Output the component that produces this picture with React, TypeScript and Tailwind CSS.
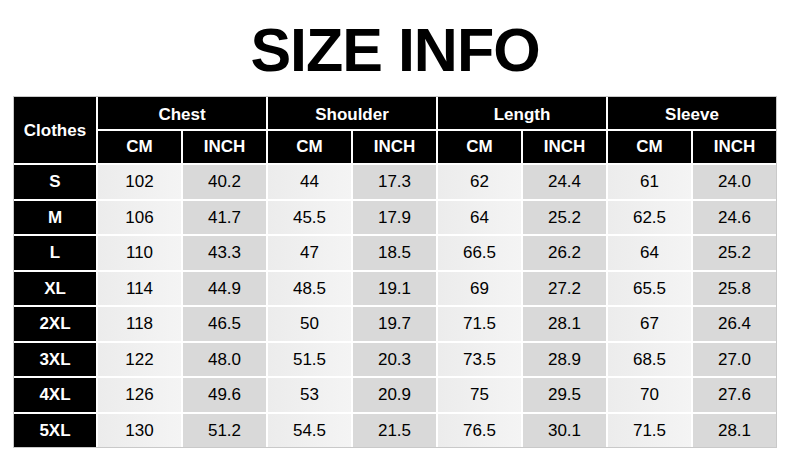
import { Fragment } from 'react';

const groups = ['Chest', 'Shoulder', 'Length', 'Sleeve'];

const rows: [string, string[]][] = [
  ['S', ['102', '40.2', '44', '17.3', '62', '24.4', '61', '24.0']],
  ['M', ['106', '41.7', '45.5', '17.9', '64', '25.2', '62.5', '24.6']],
  ['L', ['110', '43.3', '47', '18.5', '66.5', '26.2', '64', '25.2']],
  ['XL', ['114', '44.9', '48.5', '19.1', '69', '27.2', '65.5', '25.8']],
  ['2XL', ['118', '46.5', '50', '19.7', '71.5', '28.1', '67', '26.4']],
  ['3XL', ['122', '48.0', '51.5', '20.3', '73.5', '28.9', '68.5', '27.0']],
  ['4XL', ['126', '49.6', '53', '20.9', '75', '29.5', '70', '27.6']],
  ['5XL', ['130', '51.2', '54.5', '21.5', '76.5', '30.1', '71.5', '28.1']],
];

// black header cell
const head = 'bg-black text-white font-bold text-[17px] flex items-center justify-center';

export default function App() {
  return (
    <div className="w-[790px] h-[459px] bg-white font-['Liberation_Sans',Arial,sans-serif] text-black">
      <h1 className="pt-[20px] text-center text-[61px] leading-[61px] font-bold tracking-[-1px]">
        SIZE INFO
      </h1>

      <div className="mt-[15px] mx-auto w-fit border border-[#c9c9c9] bg-white grid grid-cols-[82px_repeat(8,83px)] grid-rows-[32px_32px_repeat(8,33.5px)] gap-[2px]">
        <div className={head + ' row-span-2 pt-[2px]'}>Clothes</div>
        {groups.map((g) => (
          <div key={g} className={head + ' col-span-2 pt-[3px]'}>
            {g}
          </div>
        ))}
        {groups.map((g) => (
          <Fragment key={g}>
            <div className={head}>CM</div>
            <div className={head}>INCH</div>
          </Fragment>
        ))}

        {rows.map(([size, vals]) => (
          <Fragment key={size}>
            <div className={head}>{size}</div>
            {vals.map((v, i) => (
              <div
                key={i}
                className={
                  i % 2 === 0
                    ? 'bg-gradient-to-r from-[#ececec] to-[#f4f4f4] text-[17px] flex items-center justify-center'
                    : 'bg-[#d9d9d9] text-[17px] flex items-center justify-center'
                }
              >
                {v}
              </div>
            ))}
          </Fragment>
        ))}
      </div>
    </div>
  );
}
